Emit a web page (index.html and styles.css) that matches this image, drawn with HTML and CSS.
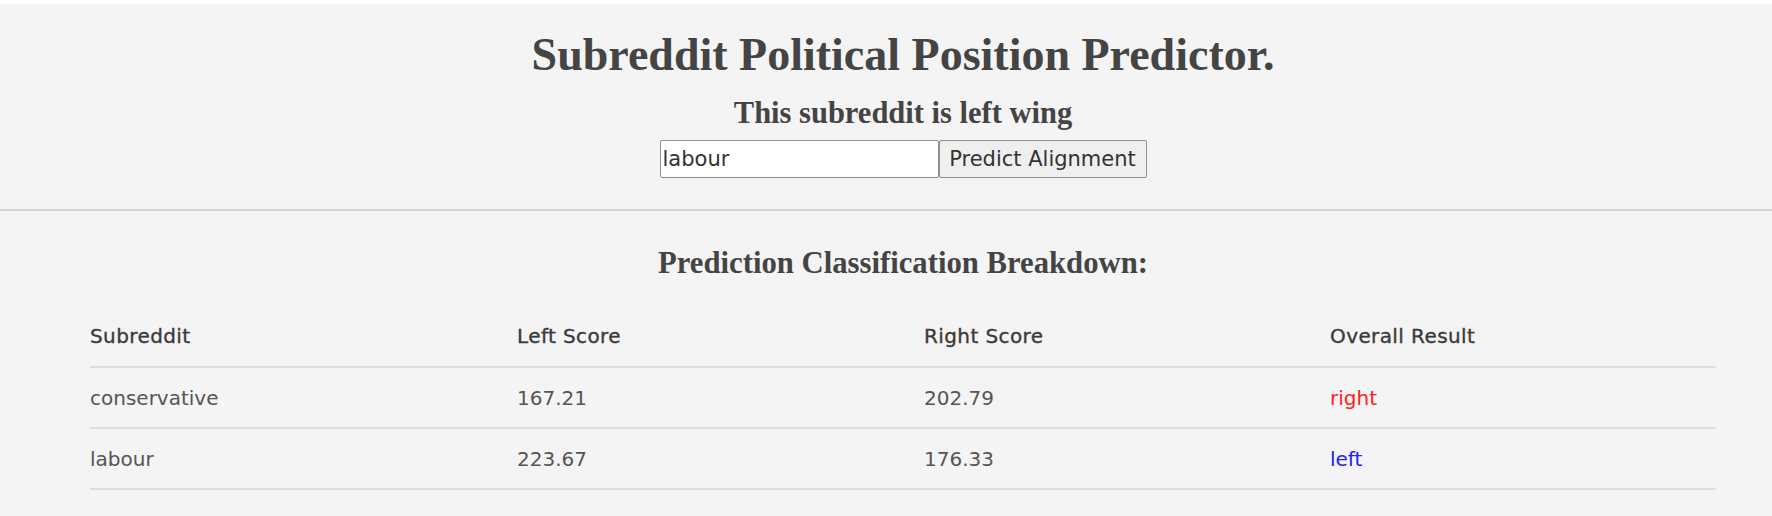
FILE: index.html
```html
<!DOCTYPE html>
<html lang="en">
<head>
<meta charset="utf-8">
<title>Subreddit Political Position Predictor</title>
<link rel="stylesheet" href="styles.css">
</head>
<body>
<div class="page">
  <header class="hero">
    <h1 class="title">Subreddit Political Position Predictor.</h1>
    <h2 class="verdict">This subreddit is left wing</h2>
    <form class="search">
      <input class="search-input" type="text" value="labour">
      <button class="search-button" type="button">Predict Alignment</button>
    </form>
  </header>
  <div class="divider"></div>
  <section class="breakdown">
    <h2 class="breakdown-title">Prediction Classification Breakdown:</h2>
    <table class="results">
      <colgroup>
        <col class="col-a"><col class="col-b"><col class="col-c"><col class="col-d">
      </colgroup>
      <thead>
        <tr><th>Subreddit</th><th>Left Score</th><th>Right Score</th><th>Overall Result</th></tr>
      </thead>
      <tbody>
        <tr><td>conservative</td><td>167.21</td><td>202.79</td><td class="res-right">right</td></tr>
        <tr><td>labour</td><td>223.67</td><td>176.33</td><td class="res-left">left</td></tr>
      </tbody>
    </table>
  </section>
</div>
</body>
</html>
```

FILE: styles.css
```css
html, body {
  margin: 0;
  padding: 0;
  background: #ffffff;
  overflow: hidden;
}

body {
  font-family: "DejaVu Sans", "Open Sans", sans-serif;
}

.page {
  width: 1806px;
  margin-top: 4px;
  min-height: 520px;
  background: #f4f4f4;
}

.hero {
  display: flex;
  flex-direction: column;
  align-items: center;
  padding-top: 28px;
  padding-bottom: 31px;
}

.title {
  margin: 0;
  font-family: "Liberation Serif", "Times New Roman", serif;
  font-weight: bold;
  font-size: 46px;
  line-height: 46px;
  color: #444444;
}

.verdict {
  margin: 20px 0 0;
  font-family: "Liberation Serif", "Times New Roman", serif;
  font-weight: bold;
  font-size: 30.5px;
  line-height: 30px;
  color: #444444;
}

.search {
  display: flex;
  margin-top: 12px;
  height: 38px;
}

.search-input {
  box-sizing: border-box;
  width: 279px;
  height: 38px;
  margin: 0;
  padding: 0 2px;
  border: 1px solid #8f8f8f;
  border-radius: 2px;
  background: #ffffff;
  font-family: "DejaVu Sans", sans-serif;
  font-size: 21px;
  color: #333333;
}

.search-button {
  box-sizing: border-box;
  width: 208px;
  height: 38px;
  margin: 0;
  padding: 0 6px;
  border: 1px solid #8f8f8f;
  border-radius: 2px;
  background: #efefef;
  font-family: "DejaVu Sans", sans-serif;
  font-size: 21px;
  color: #333333;
}

.divider {
  height: 2px;
  background: #d4d4d4;
}

.breakdown {
  display: flex;
  flex-direction: column;
  align-items: center;
}

.breakdown-title {
  margin: 37px 0 0;
  font-family: "Liberation Serif", "Times New Roman", serif;
  font-weight: bold;
  font-size: 30.7px;
  line-height: 30px;
  color: #444444;
}

.results {
  margin-top: 27px;
  width: 1626px;
  align-self: flex-start;
  margin-left: 90px;
  border-collapse: collapse;
  table-layout: fixed;
  font-size: 20px;
}

.col-a { width: 427px; }
.col-b { width: 407px; }
.col-c { width: 406px; }
.col-d { width: 386px; }

.results th,
.results td {
  padding: 0;
  text-align: left;
  vertical-align: middle;
  border-bottom: 2px solid #dedede;
}

.results th {
  height: 61px;
  font-weight: normal;
  letter-spacing: 0.4px;
  -webkit-text-stroke: 0.35px #3a3a3a;
  color: #3a3a3a;
}

.results td {
  height: 59px;
  color: #555555;
}

.results td.res-right { color: #ff2020; }
.results td.res-left { color: #2020ff; }
```
